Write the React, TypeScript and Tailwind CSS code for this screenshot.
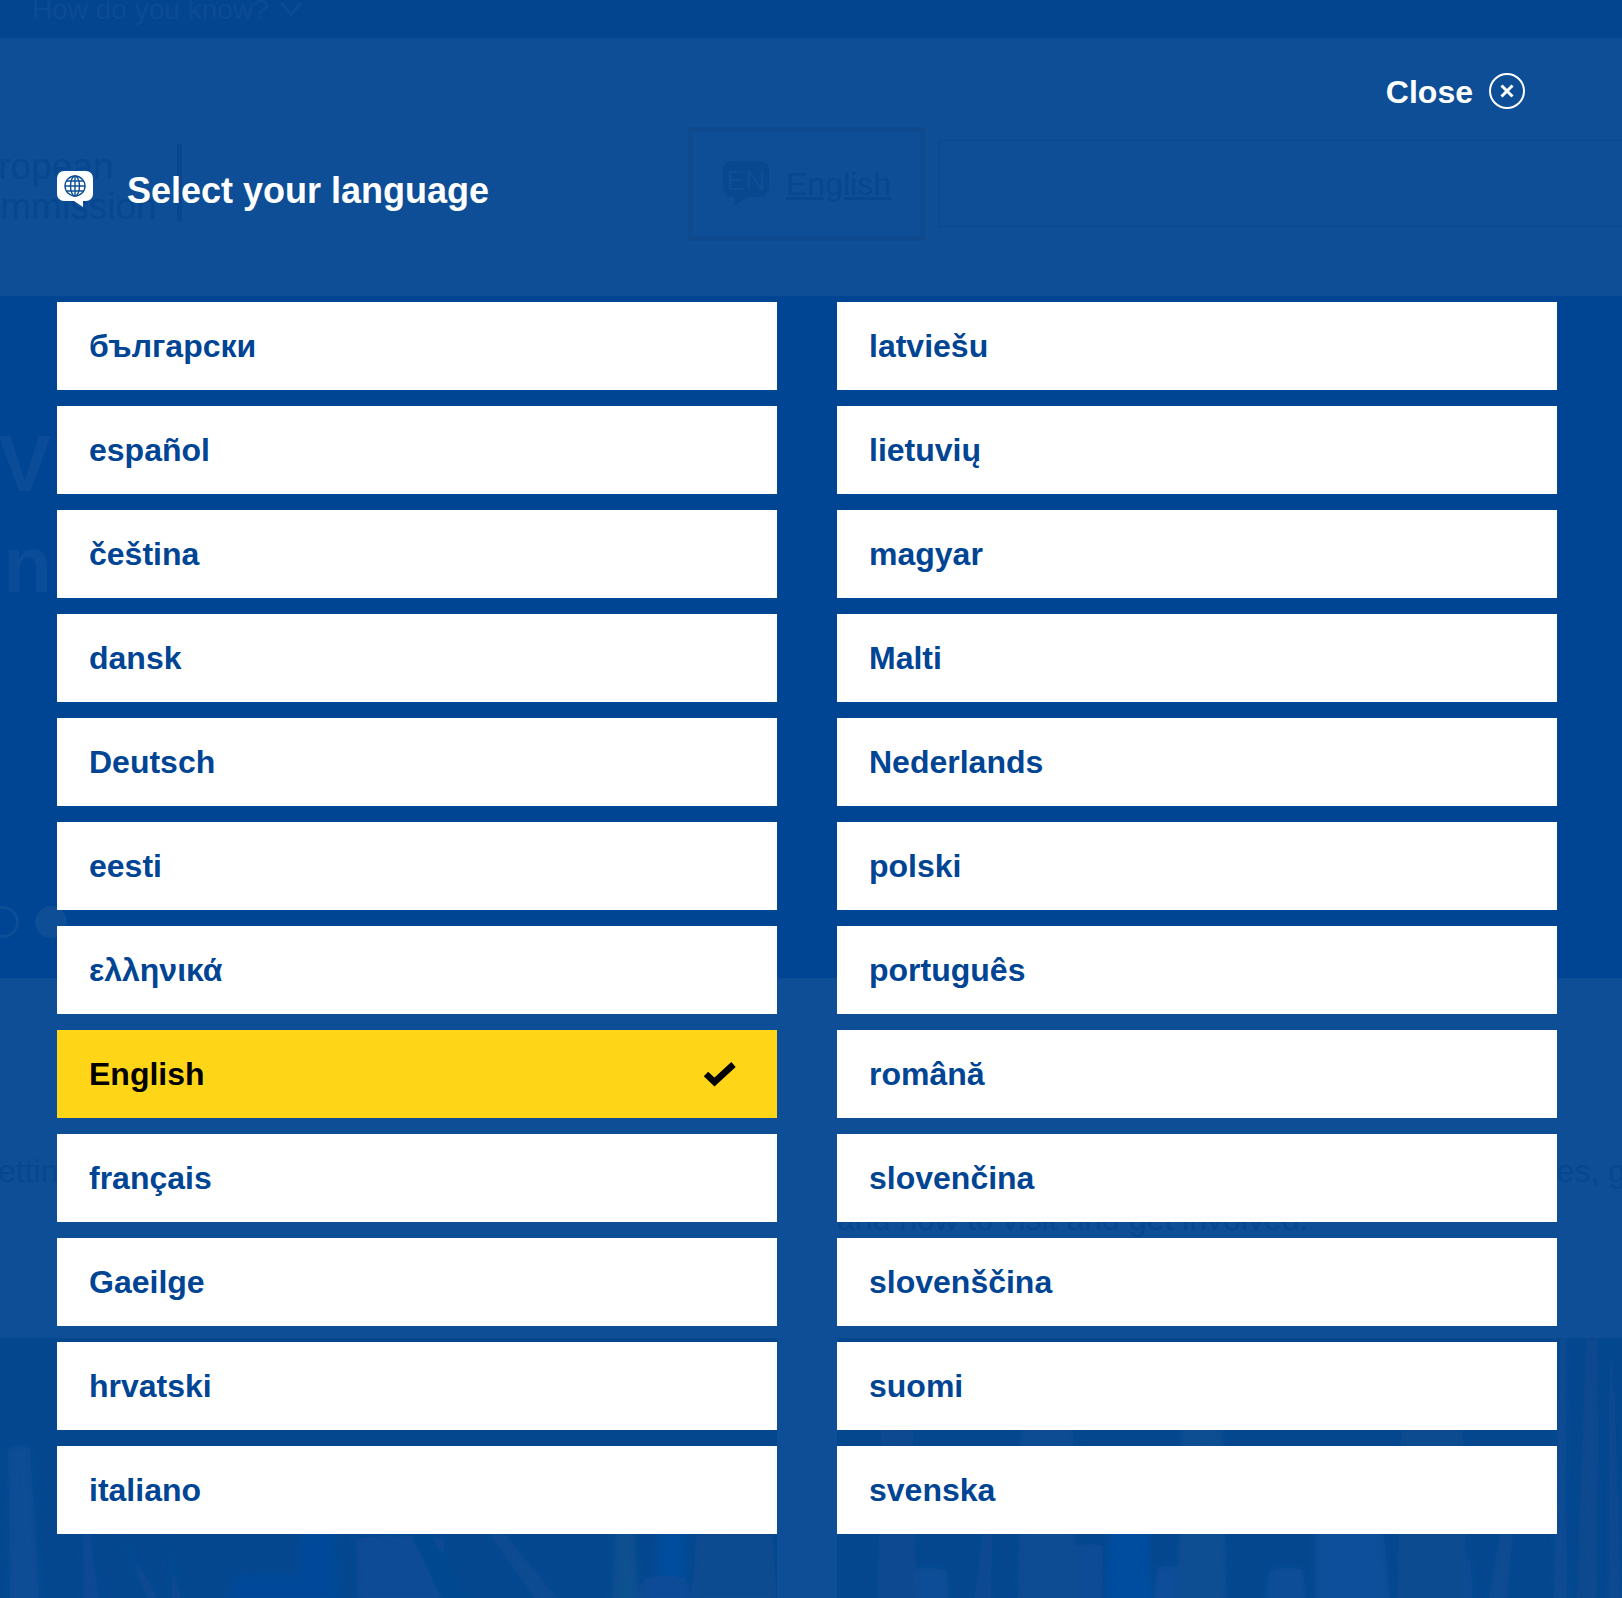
import React from 'react';

const leftLanguages = ['български', 'español', 'čeština', 'dansk', 'Deutsch', 'eesti', 'ελληνικά', 'English', 'français', 'Gaeilge', 'hrvatski', 'italiano'];
const rightLanguages = ['latviešu', 'lietuvių', 'magyar', 'Malti', 'Nederlands', 'polski', 'português', 'română', 'slovenčina', 'slovenščina', 'suomi', 'svenska'];

// soft vertical streaks of the faded photo: x at top, x at bottom, width, top y, colour
const leftStreaks: [number, number, number, number, string][] = [
  [4, 10, 30, 110, '#0b4d96'],
  [78, 84, 16, 190, '#084a95'],
  [120, 150, 12, 205, '#094b93'],
  [165, 172, 10, 205, '#0a4b92'],
  [230, 226, 100, 238, '#05499a'],
  [298, 296, 42, 192, '#03499a'],
  [352, 358, 96, 200, '#094b96'],
  [405, 445, 26, 192, '#064890'],
  [482, 540, 24, 192, '#094b92'],
  [612, 612, 26, 192, '#0e5190'],
  [655, 655, 32, 192, '#024d9f'],
  [692, 692, 85, 197, '#0b4b91'],
  [640, 640, 50, 240, '#094b98'],
];

const rightStreaks: [number, number, number, number, string][] = [
  [68, 66, 46, 232, '#0a4d97'],
  [142, 136, 18, 192, '#074993'],
  [236, 232, 34, 208, '#094c96'],
  [269, 269, 46, 192, '#024ea0'],
  [316, 316, 30, 230, '#094d9a'],
  [428, 428, 42, 232, '#0b4e98'],
  [474, 478, 76, 192, '#0d4f9a'],
  [594, 592, 44, 222, '#0a4d97'],
  [660, 650, 20, 192, '#0a4b92'],
  [719, 716, 14, 0, '#0b4b93'],
  [745, 740, 20, 0, '#10498f'],
  [768, 772, 12, 0, '#0b4990'],
  [40, 40, 40, 90, '#074a90'],
  [180, 180, 60, 90, '#094c93'],
  [340, 340, 50, 90, '#0b4d92'],
  [560, 560, 70, 90, '#094b90'],
];

const Streaks = ({ items }: { items: [number, number, number, number, string][] }) => (
  <>
    {items.map(([x1, x2, w, top, color]) => (
      <path
        key={`${x1}-${top}`}
        d={`M${x1 + 4} ${top} Q${x1 + w / 2} ${top - 5} ${x1 + w - 4} ${top} L${x2 + w} 268 L${x2} 268 Z`}
        fill={color}
      />
    ))}
  </>
);

const LanguageRow = ({ name }: { name: string }) => {
  const selected = name === 'English';
  return (
    <a className={`flex h-[88px] items-center justify-between pl-8 pr-[40px] text-[32px] font-bold ${selected ? 'bg-[#ffd617] text-black' : 'bg-white text-[#004494]'}`}>
      <span>{name}</span>
      {selected && (
        <svg width="34" height="26" viewBox="0 0 34 26" fill="none">
          <path d="M3 13 L11.5 21 L30.5 3.5" stroke="#000" strokeWidth="6.5" />
        </svg>
      )}
    </a>
  );
};

const GlobeBubble = () => (
  <svg width="36" height="36" viewBox="0 0 36 36" fill="none" className="mt-[-4px]">
    <path d="M7 0 H29 A7 7 0 0 1 36 7 V23 A7 7 0 0 1 29 30 H26 V36 L17 30 H7 A7 7 0 0 1 0 23 V7 A7 7 0 0 1 7 0 Z" fill="#fff" />
    <g stroke="#0d4e97" strokeWidth="1.4">
      <circle cx="18" cy="15" r="10" />
      <ellipse cx="18" cy="15" rx="4.5" ry="10" />
      <path d="M18 5 V25 M8 15 H28 M9.5 10 H26.5 M9.5 20 H26.5" />
    </g>
  </svg>
);

const CloseIcon = () => (
  <svg width="36" height="36" viewBox="0 0 36 36" fill="none" stroke="#fff">
    <circle cx="18" cy="18" r="17" strokeWidth="2" />
    <path d="M12.5 12.5 L23.5 23.5 M23.5 12.5 L12.5 23.5" strokeWidth="3" />
  </svg>
);

const EnBubble = () => (
  <span className="relative block h-[46px] w-[46px] text-center text-[28px] leading-[40px] text-[#0d4e97]">
    <svg width="46" height="46" viewBox="0 0 46 46" className="absolute left-0 top-0">
      <path d="M9 0 H37 A9 9 0 0 1 46 9 V27 A9 9 0 0 1 37 36 H24 L11 45 V36 H9 A9 9 0 0 1 0 27 V9 A9 9 0 0 1 9 0 Z" fill="#07488f" />
    </svg>
    <span className="relative">EN</span>
  </span>
);

// the faded crowd photo behind the overlay, split in two by the gutter
const PhotoLeft = () => (
  <svg width="777" height="260" viewBox="0 0 777 260" className="block">
    <defs>
      <filter id="blurA" x="-10%" y="-10%" width="120%" height="120%"><feGaussianBlur stdDeviation="4" /></filter>
    </defs>
    <rect width="777" height="260" fill="#04478f" />
    <g filter="url(#blurA)">
      <Streaks items={leftStreaks} />
    </g>
  </svg>
);

const PhotoRight = () => (
  <svg width="785" height="260" viewBox="0 0 785 260" className="block">
    <defs>
      <filter id="blurB" x="-10%" y="-10%" width="120%" height="120%"><feGaussianBlur stdDeviation="3" /></filter>
    </defs>
    <rect width="785" height="260" fill="#04478f" />
    <g filter="url(#blurB)">
      <Streaks items={rightStreaks} />
    </g>
  </svg>
);

export default function App() {
  return (
    <div className="relative h-[1598px] w-[1622px] overflow-hidden font-['Liberation_Sans',Arial,sans-serif]">
      {/* page behind the overlay */}
      <div className="flex h-[38px] items-end gap-[11px] bg-[#04458f] pb-[12px] pl-8 text-[28px] leading-[32px] text-[#0c4b95]">
        <span>How do you know?</span>
        <svg width="22" height="16" viewBox="0 0 22 16" fill="none" stroke="#0c4b95" strokeWidth="3" className="mb-[9px]">
          <path d="M1 2 L11 13 L21 2" />
        </svg>
      </div>

      <div className="flex h-[258px] items-start bg-[#0d4e97] pt-[89px] text-[#06478f]">
        <div className="ml-[-47px] mt-[20px] w-[224px] text-[37px] leading-[40px]">
          <div>European</div>
          <div>Commission</div>
        </div>
        <div className="mt-[17px] h-[77px] w-[5px] bg-[#06478f]" />
        <div className="ml-[506px] flex h-[114px] w-[237px] items-center gap-[17px] border-[5px] border-[#0e4a8d] pl-[30px]">
          <EnBubble />
          <span className="text-[32px] underline">English</span>
        </div>
        <div className="ml-[14px] mr-[-10px] mt-[13px] h-[87px] flex-1 border border-[#08498f]" />
      </div>

      <div className="h-[682px] bg-[#004494] pt-[120px] text-[80px] font-bold leading-[96px] text-[#0b4c98]">
        <div className="ml-[-2px]">V</div>
        <div className="ml-[3px] mt-[5px]">n</div>
        <div className="mt-[293px] flex items-center gap-4">
          <div className="ml-[-13px] h-8 w-8 rounded-full border-[3px] border-[#0d4e97]" />
          <div className="h-8 w-8 rounded-full bg-[#0d4e97]" />
        </div>
      </div>

      <div className="h-[360px] bg-[#0d4e97] pt-[169px] text-[32px] leading-[48px] text-[#06478f]">
        <div className="flex justify-between whitespace-nowrap">
          <span className="ml-[-2px]">ettin</span>
          <span className="mr-[-4px]">es, g</span>
        </div>
        <div className="pl-[837px]">and how to visit and get involved.</div>
      </div>

      <div className="flex h-[260px] justify-between bg-[#0d4e97]">
        <PhotoLeft />
        <PhotoRight />
      </div>

      {/* language overlay */}
      <div className="absolute inset-0 pt-[38px]">
        <div className="flex h-[258px] flex-col">
          <div className="flex items-center justify-end gap-4 pr-[97px] pt-[34px] text-[32px] font-bold leading-[36px] text-white">
            <span className="mt-[2px]">Close</span>
            <CloseIcon />
          </div>
          <div className="mt-[59px] flex items-center gap-[34px] pl-[57px] text-[36px] font-bold leading-[44px] text-white">
            <GlobeBubble />
            <h2>Select your language</h2>
          </div>
        </div>
        <div className="mt-[6px] flex gap-[60px] pl-[57px]">
          <div className="flex w-[720px] flex-col gap-4">
            {leftLanguages.map((name) => (
              <LanguageRow key={name} name={name} />
            ))}
          </div>
          <div className="flex w-[720px] flex-col gap-4">
            {rightLanguages.map((name) => (
              <LanguageRow key={name} name={name} />
            ))}
          </div>
        </div>
      </div>
    </div>
  );
}
